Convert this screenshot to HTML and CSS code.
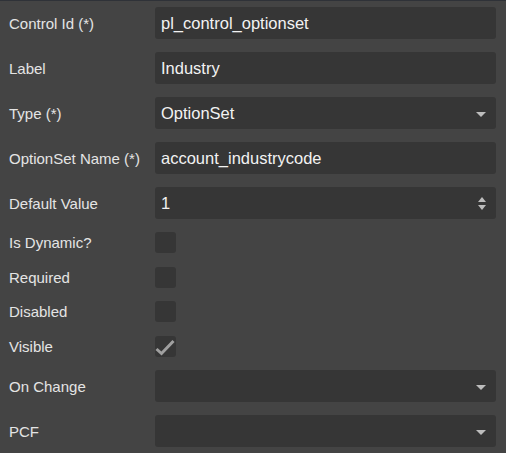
FILE: index.html
```html
<!DOCTYPE html>
<html>
<head>
<meta charset="utf-8">
<link rel="stylesheet" href="styles.css">
</head>
<body>
<div class="panel">
  <div class="row">
    <div class="label">Control Id (*)</div>
    <div class="field"><span class="value">pl_control_optionset</span></div>
  </div>
  <div class="row">
    <div class="label">Label</div>
    <div class="field"><span class="value">Industry</span></div>
  </div>
  <div class="row">
    <div class="label">Type (*)</div>
    <div class="field"><span class="value">OptionSet</span><span class="caret"></span></div>
  </div>
  <div class="row">
    <div class="label">OptionSet Name (*)</div>
    <div class="field"><span class="value">account_industrycode</span></div>
  </div>
  <div class="row">
    <div class="label">Default Value</div>
    <div class="field"><span class="value">1</span>
      <span class="spin"><span class="up"></span><span class="down"></span></span>
    </div>
  </div>
  <div class="row check-row">
    <div class="label">Is Dynamic?</div>
    <div class="box"></div>
  </div>
  <div class="row check-row">
    <div class="label">Required</div>
    <div class="box"></div>
  </div>
  <div class="row check-row">
    <div class="label">Disabled</div>
    <div class="box"></div>
  </div>
  <div class="row check-row">
    <div class="label">Visible</div>
    <div class="box"><svg width="21" height="21" viewBox="0 0 21 21"><path d="M1.5 13 L6.5 17.5 L18.5 5" fill="none" stroke="#a0a0a0" stroke-width="3"/></svg></div>
  </div>
  <div class="row">
    <div class="label">On Change</div>
    <div class="field"><span class="value"></span><span class="caret"></span></div>
  </div>
  <div class="row">
    <div class="label">PCF</div>
    <div class="field"><span class="value"></span><span class="caret"></span></div>
  </div>
</div>
</body>
</html>
```

FILE: styles.css
```css
html, body {
  margin: 0;
  padding: 0;
  background: #444444;
}
body {
  width: 506px;
  height: 453px;
  overflow: hidden;
  border-top: 1px solid #2f3238;
  box-sizing: border-box;
  font-family: "Liberation Sans", Arial, sans-serif;
}
.panel {
  display: flex;
  flex-direction: column;
  gap: 13px;
  padding: 6px 10px 0 9px;
}
.row {
  display: flex;
  align-items: center;
  height: 32px;
}
.check-row {
  height: 21.5px;
}
.label {
  width: 146px;
  flex: none;
  color: #e4e4e4;
  font-size: 15px;
}
.field {
  flex: 1;
  height: 32px;
  background: #363636;
  border-radius: 3px;
  display: flex;
  align-items: center;
  padding: 0 10px 0 6px;
  box-sizing: border-box;
}
.value {
  flex: 1;
  color: #f2f2f2;
  font-size: 16.5px;
}
.caret {
  width: 0;
  height: 0;
  border-left: 5px solid transparent;
  border-right: 5px solid transparent;
  border-top: 5px solid #bdbdbd;
  margin-top: 2px;
}
.spin {
  display: flex;
  flex-direction: column;
  gap: 3px;
  margin-top: 1px;
}
.spin .up {
  width: 0;
  height: 0;
  border-left: 4.5px solid transparent;
  border-right: 4.5px solid transparent;
  border-bottom: 5px solid #bdbdbd;
}
.spin .down {
  width: 0;
  height: 0;
  border-left: 4.5px solid transparent;
  border-right: 4.5px solid transparent;
  border-top: 5px solid #bdbdbd;
}
.box {
  width: 21px;
  height: 21px;
  background: #363636;
  border-radius: 3px;
  display: flex;
}
```
